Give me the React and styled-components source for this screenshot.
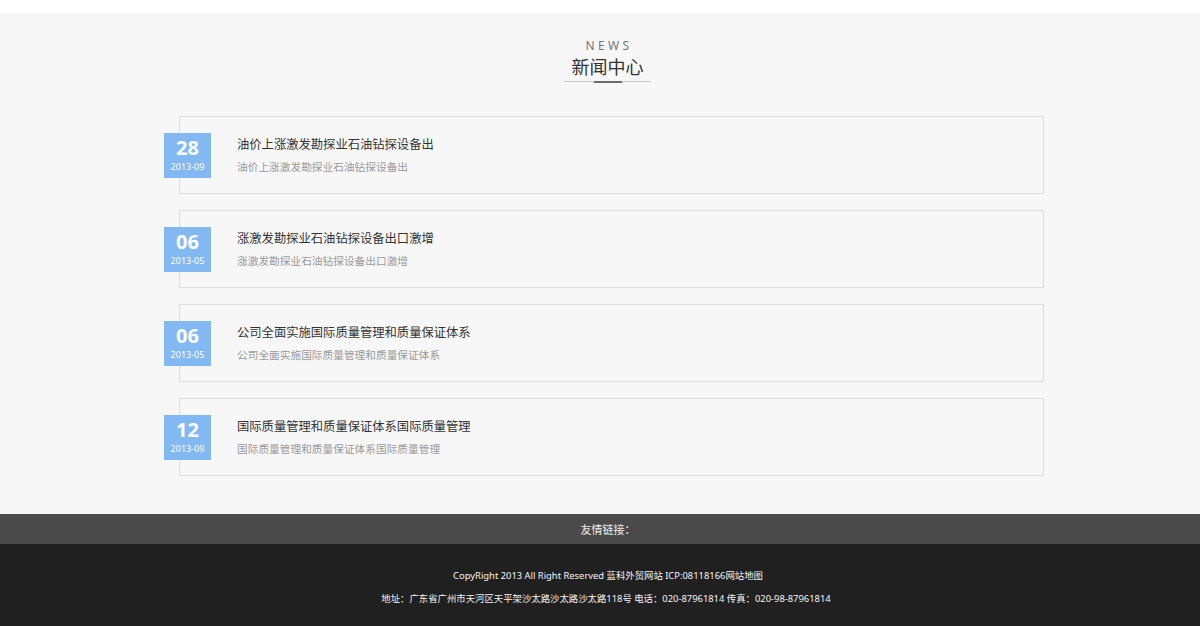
import React from 'react'
import styled, { createGlobalStyle } from 'styled-components'

const GlobalStyle = createGlobalStyle`
  html, body {
    margin: 0;
    padding: 0;
    background: #ffffff;
    font-family: 'Noto Sans', 'Noto Sans CJK SC', sans-serif;
  }
`

const news = [
  { day: '28', month: '2013-09', title: '油价上涨激发勘探业石油钻探设备出', desc: '油价上涨激发勘探业石油钻探设备出' },
  { day: '06', month: '2013-05', title: '涨激发勘探业石油钻探设备出口激增', desc: '涨激发勘探业石油钻探设备出口激增' },
  { day: '06', month: '2013-05', title: '公司全面实施国际质量管理和质量保证体系', desc: '公司全面实施国际质量管理和质量保证体系' },
  { day: '12', month: '2013-09', title: '国际质量管理和质量保证体系国际质量管理', desc: '国际质量管理和质量保证体系国际质量管理' },
]

const Page = styled.div`
  padding-top: 13px;
`

const NewsSection = styled.section`
  background: #f7f7f7;
  padding: 26px 0 38px;
`

const Heading = styled.div`
  display: flex;
  flex-direction: column;
  align-items: center;
  padding-left: 15px;
`

const EnTitle = styled.div`
  font-size: 12px;
  line-height: 14px;
  letter-spacing: 3.4px;
  color: #777;
  padding-left: 3px;
`

const CnTitle = styled.h2`
  margin: 2px 0 0;
  font-size: 18px;
  line-height: 24px;
  font-weight: 400;
  color: #333;
`

const Underline = styled.div`
  margin-top: 2px;
  width: 87px;
  height: 1px;
  background: #c8c8c8;
  display: flex;
  justify-content: center;
  align-items: center;
`

const UnderlineMark = styled.span`
  width: 28px;
  height: 2px;
  background: #6a6a6a;
`

const List = styled.ul`
  list-style: none;
  margin: 34px 0 0 calc(50% - 436px);
  padding: 0;
  width: 880px;
  display: flex;
  flex-direction: column;
  gap: 16px;
`

const Card = styled.li`
  margin-left: 15px;
  width: 865px;
  height: 78px;
  box-sizing: border-box;
  border: 1px solid #dcdcdc;
  display: flex;
  align-items: center;
`

const DateBox = styled.div`
  margin-left: -16px;
  width: 47px;
  height: 45px;
  background: #82b9f3;
  color: #fff;
  display: flex;
  flex-direction: column;
  align-items: center;
  justify-content: center;
  flex-shrink: 0;
`

const Day = styled.span`
  font-size: 20px;
  line-height: 22px;
  font-weight: 700;
`

const Month = styled.span`
  font-size: 9px;
  line-height: 12px;
  margin-top: 2px;
`

const Text = styled.div`
  margin-left: 26px;
  display: flex;
  flex-direction: column;
  gap: 5px;
  margin-top: 1px;
`

const Title = styled.a`
  font-size: 12.3px;
  line-height: 18px;
  color: #333;
  text-decoration: none;
`

const Desc = styled.p`
  margin: 0;
  font-size: 10.7px;
  line-height: 16px;
  color: #9a9a9a;
`

const LinksBar = styled.div`
  background: #4a4a4a;
  height: 30px;
  display: flex;
  align-items: center;
  justify-content: center;
  color: #eee;
  font-size: 11px;
  padding-left: 16px;
`

const Bottom = styled.footer`
  background: #202020;
  height: 82px;
  box-sizing: border-box;
  padding-top: 24px;
  display: flex;
  flex-direction: column;
  align-items: center;
  gap: 7px;
  color: #f4f4f4;
  font-size: 9.4px;
  line-height: 16px;
`

const FooterLine = styled.p`
  margin: 0;
  padding-left: ${p => p.$shift || 0}px;
`

export default function App() {
  return (
    <Page>
      <GlobalStyle />
      <NewsSection>
        <Heading>
          <EnTitle>NEWS</EnTitle>
          <CnTitle>新闻中心</CnTitle>
          <Underline>
            <UnderlineMark />
          </Underline>
        </Heading>
        <List>
          {news.map((item, i) => (
            <Card key={i}>
              <DateBox>
                <Day>{item.day}</Day>
                <Month>{item.month}</Month>
              </DateBox>
              <Text>
                <Title href="#">{item.title}</Title>
                <Desc>{item.desc}</Desc>
              </Text>
            </Card>
          ))}
        </List>
      </NewsSection>
      <LinksBar>友情链接：</LinksBar>
      <Bottom>
        <FooterLine $shift={16}>CopyRight 2013 All Right Reserved 蓝科外贸网站 ICP:08118166网站地图</FooterLine>
        <FooterLine $shift={12}>地址：广东省广州市天河区天平架沙太路沙太路沙太路118号 电话：020-87961814 传真：020-98-87961814</FooterLine>
      </Bottom>
    </Page>
  )
}
